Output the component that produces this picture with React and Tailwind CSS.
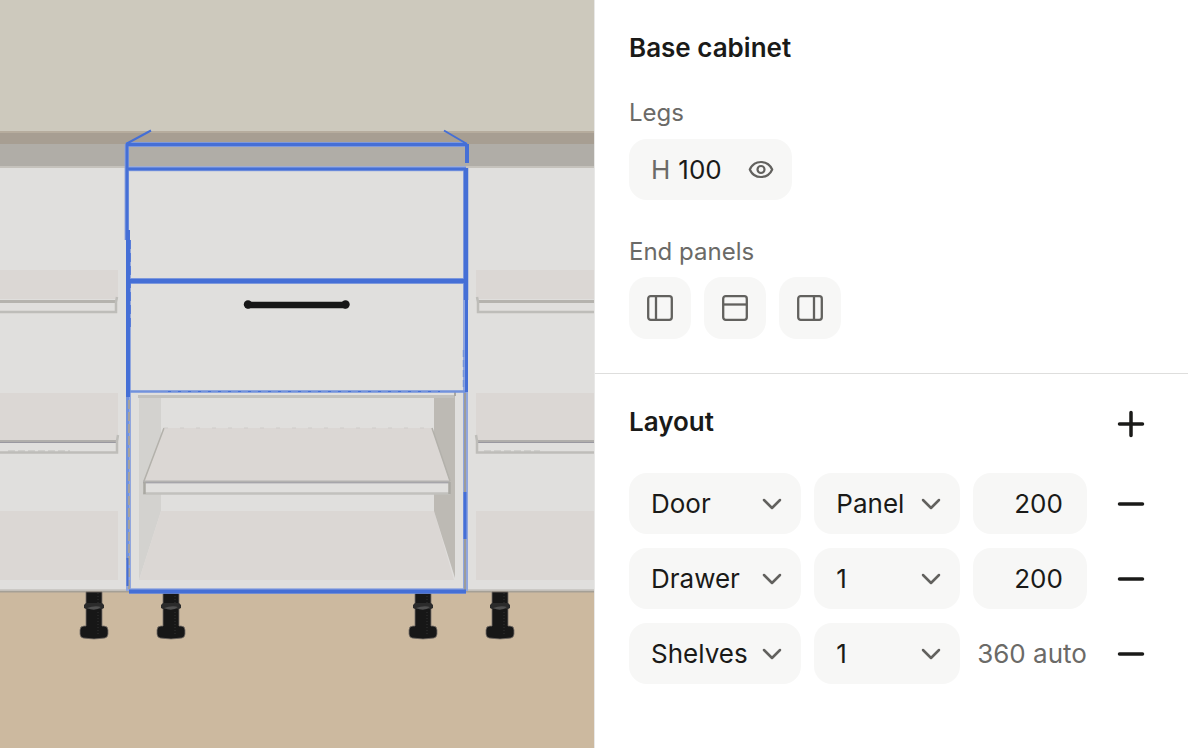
import React, { useState } from "react";

const TYPES = ["Door", "Drawer", "Shelves"];
const VARIANTS = { Door: ["Panel", "Glass"], Drawer: ["1", "2", "3"], Shelves: ["1", "2", "3"] };

const INITIAL_ROWS = [
  { id: 1, type: "Door", variant: "Panel", height: "200" },
  { id: 2, type: "Drawer", variant: "1", height: "200" },
  { id: 3, type: "Shelves", variant: "1", auto: 360 },
];

const END_PANELS = [
  { id: "left", label: "Left end panel", line: "M9 1v24" },
  { id: "top", label: "Top end panel", line: "M1 9.500h24" },
  { id: "right", label: "Right end panel", line: "M17 1v24" },
];

/* ── Icons ── */
function EyeIcon() {
  return (
    <svg width="26" height="20" viewBox="0 0 26 20" fill="none" stroke="currentColor" strokeWidth="2.200">
      <path d="M1.800 9.500C4 4.500 8 2 13 2s9 2.500 11.200 7.500C22 14.500 18 17 13 17S4 14.500 1.800 9.500Z" strokeLinejoin="round" />
      <circle cx="13" cy="9.500" r="3.500" />
    </svg>
  );
}

function PanelIcon({ line }) {
  return (
    <svg width="26" height="26" viewBox="0 0 26 26" fill="none" stroke="currentColor" strokeWidth="2.300">
      <rect x="1.200" y="1.200" width="23.600" height="23.600" rx="2.500" />
      <path d={line} />
    </svg>
  );
}

function ChevronIcon() {
  return (
    <svg width="20" height="12" viewBox="0 0 20 12" fill="none" stroke="currentColor" strokeWidth="2.500" strokeLinecap="round" strokeLinejoin="round">
      <path d="M2 2l8 8 8-8" />
    </svg>
  );
}

function PlusIcon() {
  return (
    <svg width="28" height="28" viewBox="0 0 28 28" fill="none" stroke="currentColor" strokeWidth="3.500" strokeLinecap="round">
      <path d="M2.500 14h23M14 2.500v23" />
    </svg>
  );
}

function MinusIcon() {
  return (
    <svg width="28" height="28" viewBox="0 0 28 28" fill="none" stroke="currentColor" strokeWidth="3.500" strokeLinecap="round">
      <path d="M2.500 14h23" />
    </svg>
  );
}

/* ── 3D preview ── */
function Leg({ x }) {
  return (
    <g transform={`translate(${x} 592)`}>
      <path d="M-8 0H8v34h2q4 0 4 4v4q0 3-3 4-11 2-22 0-3-1-3-4v-4q0-4 4-4h2Z" fill="#171717" stroke="#77706a" strokeWidth="0.800" />
      <path d="M-8 11l-2 2v3l2 1H8l2-1v-3l-2-2Z" fill="#2b2b2b" />
      <path d="M-7 16q8-3 14-1-6 5-14 1Z" fill="#505050" />
      <path d="M4 1v10M4 20v24" stroke="#333" strokeWidth="1" strokeDasharray="1 2" />
    </g>
  );
}

// Open shelving of a neighbouring cabinet, drawn for the left side
function SideShelves() {
  return (
    <g>
      <path d="M-1 270h119v29H-1ZM-1 393h119v48H-1ZM-1 511h119v69H-1Z" fill="#dbd7d4" />
      <path d="M-1 301.500H116" stroke="#b5b3ae" strokeWidth="3" />
      <path d="M117 297l-1 5v10H-1" fill="none" stroke="#bebdb9" strokeWidth="2.500" />
      <path d="M-1 441.500H117" stroke="#b0aeab" strokeWidth="3" />
      <path d="M-1 442.500H117" stroke="#9998a0" strokeWidth="1" />
      <path d="M118 435l-1 6v11.500H-1" fill="none" stroke="#bebdb9" strokeWidth="2.500" />
    </g>
  );
}

function CabinetScene() {
  return (
    <svg
      className="block h-full w-full"
      viewBox="0 0 594 748"
      preserveAspectRatio="xMidYMid slice"
      role="img"
      aria-label="Cabinet preview"
    >
      {/* wall, worktop, fronts, floor */}
      <rect width="594" height="132" fill="#cdc9bd" />
      <rect y="131" width="594" height="14" fill="#a79e92" />
      <rect y="131" width="594" height="2" fill="#b6ac9d" />
      <rect y="144" width="594" height="24" fill="#b0ada7" />
      <rect y="167" width="594" height="425" fill="#e0dfdd" />
      <rect y="166" width="594" height="2" fill="#c5c2bc" />
      <rect y="592" width="594" height="156" fill="#ccb99f" />
      <path d="M0 589.500H594" stroke="#cbc9c5" strokeWidth="1" />
      <path d="M0 591.500H594" stroke="#a5a096" strokeWidth="2" />

      <SideShelves />
      <g transform="translate(594 0) scale(-1 1)">
        <SideShelves />
      </g>
      <path d="M8 451H70M484 451H540" stroke="#bebdb9" strokeWidth="1" strokeDasharray="7 3" />

      {/* open compartment */}
      <path d="M139 396H161V511L139 580Z" fill="#d3d2cf" />
      <path d="M161 511H434L454 580H139Z" fill="#dbd7d4" />
      <path d="M434 396H455V578L434 511Z" fill="#bdbab4" />
      <path d="M138 396.500H454" stroke="#c3c2be" strokeWidth="3" />
      <path d="M455 392v4" stroke="#aaa8a3" strokeWidth="2" />
      <path d="M164 428H432L450 482H144Z" fill="#dbd7d4" />
      <path d="M164 428L144 481M432 428L450 481" stroke="#b3b1ab" strokeWidth="1.500" />
      <path d="M164 428H432" stroke="#cfccc9" strokeWidth="1" strokeDasharray="4 12" />
      <rect x="144" y="482" width="306" height="11" fill="#e0dfdd" />
      <path d="M143 493.500H450" stroke="#c2c1bd" strokeWidth="2.500" />
      <path d="M143 481.500H450" stroke="#b3b2b0" strokeWidth="2" />
      <path d="M143 482.800H450" stroke="#97969e" strokeWidth="1" />
      <path d="M144.500 482v12M449.500 482v12" stroke="#aaa9a3" strokeWidth="2.500" />

      {/* handle */}
      <path d="M247 305H346" stroke="#171717" strokeWidth="6.500" />
      <circle cx="248" cy="304.500" r="4.200" fill="#171717" />
      <circle cx="345.500" cy="304.500" r="4.200" fill="#171717" />

      <Leg x={94} />
      <Leg x={171} />
      <Leg x={423} />
      <Leg x={500} />

      {/* selection outline */}
      <g fill="none" stroke="#90a6de" strokeWidth="5">
        <path d="M126 144.500H467" />
        <path d="M127 168.800H466" />
        <path d="M126.800 144V240" strokeWidth="4.500" />
        <path d="M128.500 281H466" strokeWidth="6" />
        <path d="M128.500 240V591" />
        <path d="M465.500 168V591" />
        <path d="M129 591H466" strokeWidth="5.500" />
      </g>
      <g fill="none" stroke="#456fd6">
        <path d="M126 144L151 130.500M444 130.500L467 144" strokeWidth="2" />
        <path d="M126 144.500H467" strokeWidth="3.500" />
        <path d="M128 169H466" strokeWidth="3" />
        <path d="M127 281H466" strokeWidth="4.500" />
        <path d="M130 391.500H466" stroke="#7292dc" strokeWidth="2.500" />
        <path d="M168 391.500H440" strokeWidth="1" strokeDasharray="3 7" />
        <path d="M127 144V240" strokeWidth="3" />
        <path d="M128 230V397" strokeWidth="4" />
        <path d="M130 240V330" strokeWidth="1.500" strokeDasharray="9 4" />
        <path d="M467 144V163" strokeWidth="4" />
        <path d="M466 168V300" strokeWidth="4.500" />
        <path d="M466.500 300V392" strokeWidth="3" />
        <path d="M463.500 350V388" stroke="#7292dc" strokeWidth="1.500" strokeDasharray="7 3" />
        <path d="M127.500 397V560" stroke="#7292dc" strokeWidth="3" />
        <path d="M129 400V590" stroke="#a5a29f" strokeWidth="2" strokeDasharray="9 3" />
        <path d="M127.500 558V586" strokeWidth="2" />
        <path d="M465 393V590" stroke="#9d9c99" strokeWidth="2" />
        <path d="M465 492V539" strokeWidth="3" />
        <path d="M129 591.500H466" strokeWidth="4" />
      </g>
    </svg>
  );
}

/* ── Form parts ── */
function SelectField({ label, value, options, onChange }) {
  return (
    <div className="relative text-[#1a1a18]">
      <select
        aria-label={label}
        value={value}
        onChange={(e) => onChange(e.target.value)}
        className="h-[61px] w-full appearance-none rounded-[18px] bg-[#f7f7f6] pl-[22px] pr-12 outline-none focus-visible:ring-2 focus-visible:ring-[#456fd6]"
      >
        {options.map((o) => (
          <option key={o} value={o}>{o}</option>
        ))}
      </select>
      <span className="pointer-events-none absolute inset-y-0 right-[19px] flex items-center text-[#62615e]">
        <ChevronIcon />
      </span>
    </div>
  );
}

function LayoutRow({ row, onChange, onRemove }) {
  return (
    <div className="grid grid-cols-[172fr_145fr_114fr_45fr] items-center gap-[13px]">
      <SelectField
        label="Type"
        value={row.type}
        options={TYPES}
        onChange={(type) => onChange({ type, variant: VARIANTS[type][0] })}
      />
      <SelectField
        label="Variant"
        value={row.variant}
        options={VARIANTS[row.type]}
        onChange={(variant) => onChange({ variant })}
      />
      {row.auto ? (
        <output className="whitespace-nowrap text-right text-[#6b6a67]">{row.auto} auto</output>
      ) : (
        <input
          aria-label="Height"
          value={row.height}
          onChange={(e) => onChange({ height: e.target.value })}
          className="h-[61px] w-full rounded-[18px] bg-[#f7f7f6] pr-6 text-right text-[#1a1a18] outline-none focus-visible:ring-2 focus-visible:ring-[#456fd6]"
        />
      )}
      <button aria-label={`Remove ${row.type}`} onClick={onRemove} className="flex h-[61px] items-center justify-end">
        <MinusIcon />
      </button>
    </div>
  );
}

export default function App() {
  const [legHeight, setLegHeight] = useState("100");
  const [legsVisible, setLegsVisible] = useState(true);
  const [endPanels, setEndPanels] = useState([]);
  const [rows, setRows] = useState(INITIAL_ROWS);

  function updateRow(id, patch) {
    setRows((prev) => prev.map((r) => (r.id === id ? { ...r, ...patch } : r)));
  }

  function addRow() {
    setRows((prev) => [...prev, { id: Date.now(), type: "Drawer", variant: "1", height: "200" }]);
  }

  function toggleEndPanel(id) {
    setEndPanels((prev) => (prev.includes(id) ? prev.filter((p) => p !== id) : [...prev, id]));
  }

  return (
    <div className="grid h-screen grid-cols-2 bg-white font-['Inter',sans-serif] text-[26px] leading-8 text-[#1a1a18]">
      <div className="min-h-0 overflow-hidden">
        <CabinetScene />
      </div>

      <main className="min-h-0 overflow-y-auto border-l border-[#e8e8e7]">
        {/* ── Base cabinet ── */}
        <section className="border-b border-[#dededd] pb-[34px] pl-[34px] pr-[43px] pt-8">
          <h2 className="font-semibold">Base cabinet</h2>

          <label htmlFor="leg-height" className="mt-[33px] block text-2xl leading-8 text-[#6b6a67]">Legs</label>
          <div className="mt-[10px] inline-flex h-[61px] items-center rounded-[18px] bg-[#f7f7f6] pl-[22px] pr-[18px]">
            <span className="text-[#6b6a67]">H</span>
            <input
              id="leg-height"
              value={legHeight}
              onChange={(e) => setLegHeight(e.target.value)}
              className="ml-2 w-[50px] outline-none"
            />
            <button
              aria-label="Show legs"
              aria-pressed={legsVisible}
              onClick={() => setLegsVisible(!legsVisible)}
              className="ml-5 text-[#62615e]"
            >
              <EyeIcon />
            </button>
          </div>

          <h3 className="mt-9 text-2xl leading-8 text-[#6b6a67]">End panels</h3>
          <div className="mt-[9px] flex gap-[13px]">
            {END_PANELS.map((p) => (
              <button
                key={p.id}
                aria-label={p.label}
                aria-pressed={endPanels.includes(p.id)}
                onClick={() => toggleEndPanel(p.id)}
                className={`flex size-[62px] items-center justify-center rounded-[18px] text-[#62615e] ${
                  endPanels.includes(p.id) ? "bg-[#e6e6e4]" : "bg-[#f7f7f6]"
                }`}
              >
                <PanelIcon line={p.line} />
              </button>
            ))}
          </div>
        </section>

        {/* ── Layout ── */}
        <section className="pb-8 pl-[34px] pr-[43px] pt-8">
          <div className="flex items-end justify-between">
            <h2 className="font-semibold">Layout</h2>
            <button aria-label="Add row" onClick={addRow}>
              <PlusIcon />
            </button>
          </div>

          <div className="mt-[35px] flex flex-col gap-[14px]">
            {rows.map((row) => (
              <LayoutRow
                key={row.id}
                row={row}
                onChange={(patch) => updateRow(row.id, patch)}
                onRemove={() => setRows((prev) => prev.filter((r) => r.id !== row.id))}
              />
            ))}
          </div>
        </section>
      </main>
    </div>
  );
}
